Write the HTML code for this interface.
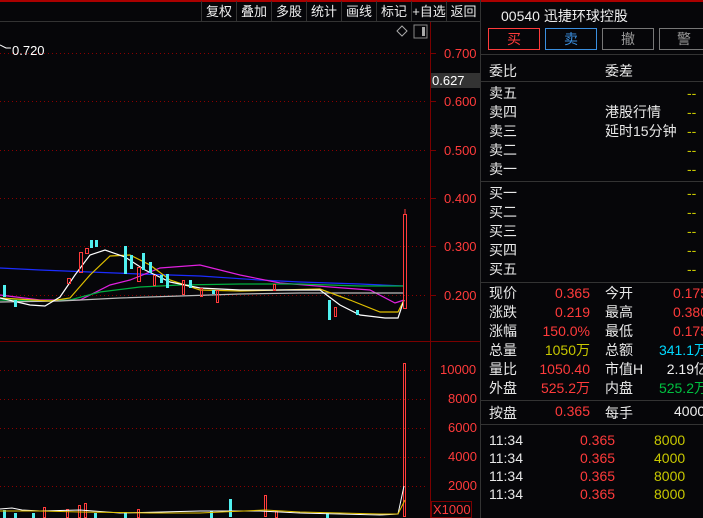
<!DOCTYPE html>
<html><head><meta charset="utf-8"><style>
*{margin:0;padding:0;box-sizing:border-box}
body{width:703px;height:518px;background:#060609;overflow:hidden;position:relative;font-family:"Liberation Sans","Noto Sans CJK SC",sans-serif;font-size:14px;color:#e8e8e8}
.a{position:absolute;white-space:nowrap}
.tb{position:absolute;top:1px;height:21px;border-left:1px solid #333;color:#eee;font-size:13px;line-height:21px;text-align:center}
.r{color:#ff3b3b}.y{color:#c8c800}.c{color:#00d8ff}.g{color:#00c040}.w{color:#eee}
.hl{position:absolute;left:481px;width:222px;height:1px;background:#333}
.btn{position:absolute;top:28px;height:22px;width:52px;border:1px solid #777;text-align:center;line-height:20px;font-size:14px;color:#999}
</style></head><body>
<div class="a" style="left:0;top:0;width:703px;height:2px;background:#a00"></div>
<div class="a" style="left:0;top:21px;width:480px;height:1px;background:#333"></div>
<div class="tb" style="left:201px;width:35px">复权</div>
<div class="tb" style="left:236px;width:35px">叠加</div>
<div class="tb" style="left:271px;width:35px">多股</div>
<div class="tb" style="left:306px;width:35px">统计</div>
<div class="tb" style="left:341px;width:35px">画线</div>
<div class="tb" style="left:376px;width:35px">标记</div>
<div class="tb" style="left:411px;width:35px">+自选</div>
<div class="tb" style="left:446px;width:34px">返回</div>
<div class="a" style="left:480px;top:0;width:1px;height:518px;background:#333"></div>
<svg class="a" style="left:0;top:0" width="480" height="518">
<g stroke="#7a0000" stroke-width="1">
<line x1="430.5" y1="22" x2="430.5" y2="518"/>
<line x1="0" y1="341.5" x2="480" y2="341.5"/>
</g>
<g stroke="#8a0000" stroke-dasharray="1,3">
<line x1="0" y1="53.5" x2="428" y2="53.5"/><line x1="0" y1="101.5" x2="428" y2="101.5"/><line x1="0" y1="150.5" x2="428" y2="150.5"/><line x1="0" y1="198.5" x2="428" y2="198.5"/><line x1="0" y1="246.5" x2="428" y2="246.5"/><line x1="0" y1="295.5" x2="428" y2="295.5"/>
<line x1="0" y1="370.5" x2="428" y2="370.5"/><line x1="0" y1="399.5" x2="428" y2="399.5"/><line x1="0" y1="428.5" x2="428" y2="428.5"/><line x1="0" y1="457.5" x2="428" y2="457.5"/><line x1="0" y1="486.5" x2="428" y2="486.5"/>
</g>
<g stroke="#7a0000"><line x1="430" y1="53.5" x2="436" y2="53.5"/><line x1="430" y1="101.5" x2="436" y2="101.5"/><line x1="430" y1="150.5" x2="436" y2="150.5"/><line x1="430" y1="198.5" x2="436" y2="198.5"/><line x1="430" y1="246.5" x2="436" y2="246.5"/><line x1="430" y1="295.5" x2="436" y2="295.5"/></g>
<rect x="414" y="25" width="13" height="13" fill="none" stroke="#888"/><rect x="422" y="27" width="3" height="9" fill="#aaa"/>
<path d="M402 26 l5 5 -5 5 -5 -5z" fill="none" stroke="#aaa"/>
<path d="M0 45 l6 3 5 0" stroke="#fff" fill="none"/>
<text x="12" y="55" fill="#fff" font-size="13" font-family="Liberation Sans">0.720</text>
<g fill="none" stroke-width="1.2">
<polyline stroke="#1b2cff" points="0,268 40,270 90,272 140,274 200,276 260,280 300,282 360,284 404,286"/>
<polyline stroke="#e020e0" points="0,295 40,300 80,300 110,285 130,280 160,268 200,265 240,275 280,283 330,287 370,290 395,303 404,300"/>
<polyline stroke="#00b040" points="0,300 40,301 70,300 100,292 140,287 180,285 240,284 300,284 360,286 404,286"/>
<polyline stroke="#bbb" points="0,302 60,301 120,298 180,296 240,294 300,293 360,293 404,293"/>
<polyline stroke="#e0c000" points="0,298 50,301 70,298 90,275 110,256 130,255 150,265 170,280 200,290 240,291 280,290 320,289 350,300 380,312 398,312 404,300"/>
<polyline stroke="#fff" points="0,298 30,305 45,306 60,297 75,275 90,255 105,250 125,257 145,270 170,282 200,288 240,290 290,290 320,290 340,305 360,315 385,318 398,318 404,300"/>
</g>
<g fill="#50f0f0">
<rect x="3" y="285" width="3" height="12"/><rect x="14" y="300" width="3" height="7"/><rect x="90" y="240" width="3" height="8"/><rect x="95" y="240" width="3" height="7"/><rect x="124" y="246" width="3" height="28"/><rect x="130" y="255" width="3" height="14"/><rect x="142" y="253" width="3" height="17"/><rect x="149" y="262" width="3" height="11"/><rect x="160" y="275" width="3" height="8"/><rect x="166" y="274" width="3" height="14"/><rect x="189" y="280" width="3" height="8"/><rect x="212" y="290" width="3" height="4"/><rect x="328" y="300" width="3" height="20"/><rect x="356" y="310" width="3" height="5"/>
</g>
<g fill="none" stroke="#ff3b3b">
<rect x="79.5" y="252.5" width="3" height="20"/><rect x="85.5" y="248.5" width="3" height="5"/><rect x="67.5" y="278.5" width="3" height="5"/><rect x="137.5" y="267.5" width="3" height="14"/><rect x="153.5" y="275.5" width="2" height="10"/><rect x="182.5" y="280.5" width="2" height="14"/><rect x="200.5" y="288.5" width="2" height="8"/><rect x="216.5" y="290.5" width="2" height="12"/><rect x="273.5" y="284.5" width="2" height="6"/><rect x="334.5" y="307.5" width="2" height="9"/>
<rect x="403.5" y="214.5" width="3" height="94"/><line x1="405" y1="209" x2="405" y2="214"/>
</g>
<g font-family="Liberation Sans" font-size="13" fill="#ff3b3b">
<text x="444" y="58">0.700</text><text x="444" y="106">0.600</text><text x="444" y="155">0.500</text><text x="444" y="203">0.400</text><text x="444" y="251">0.300</text><text x="444" y="300">0.200</text>
<text x="440" y="374">10000</text><text x="448" y="403">8000</text><text x="448" y="432">6000</text><text x="448" y="461">4000</text><text x="448" y="490">2000</text>
<text x="433" y="514">X1000</text>
</g>
<rect x="431" y="73" width="49" height="15" fill="#333"/>
<text x="432" y="85" font-family="Liberation Sans" font-size="13" fill="#fff">0.627</text>
<rect x="431.5" y="501.5" width="40" height="16" fill="none" stroke="#7a0000"/>
<rect x="403.5" y="363.5" width="2" height="153" fill="none" stroke="#ff3b3b"/>
<rect x="264.5" y="495.5" width="2" height="21" fill="none" stroke="#ff3b3b"/>
<rect x="229" y="499" width="3" height="18" fill="#50f0f0"/>
<g fill="#50f0f0"><rect x="3" y="510" width="3" height="8"/><rect x="14" y="513" width="3" height="5"/><rect x="32" y="513" width="3" height="5"/><rect x="94" y="513" width="3" height="5"/><rect x="124" y="512" width="3" height="6"/><rect x="210" y="511" width="3" height="7"/><rect x="326" y="513" width="3" height="5"/></g>
<g fill="none" stroke="#ff3b3b"><rect x="43.5" y="507.5" width="2" height="10"/><rect x="66.5" y="509.5" width="2" height="8"/><rect x="78.5" y="505.5" width="2" height="12"/><rect x="84.5" y="503.5" width="2" height="14"/><rect x="137.5" y="509.5" width="2" height="8"/><rect x="275.5" y="511.5" width="2" height="6"/></g>
<polyline fill="none" stroke="#fff" points="0,509 12,508 22,510 40,511 80,510 120,513 200,511 260,511 300,513 380,515 398,514 401,500 404,486"/>
<polyline fill="none" stroke="#e0c000" points="0,511 40,511 80,512 150,513 200,513 265,510 300,512 380,514 398,514 402,506 405,500"/>
</svg>
<div class="a w" style="left:501px;top:6px;font-size:14px">00540 迅捷环球控股</div>
<div class="btn" style="left:488px;border-color:#ff3b3b;color:#ff3b3b">买</div>
<div class="btn" style="left:545px;border-color:#3a8fe0;color:#3a8fe0">卖</div>
<div class="btn" style="left:602px">撤</div>
<div class="btn" style="left:659px;width:50px">警</div>
<div class="hl" style="top:54px"></div>
<div class="a" style="left:489px;top:61px">委比</div><div class="a" style="left:605px;top:61px">委差</div>
<div class="hl" style="top:81px"></div>
<div class="a" style="left:489px;top:84px;line-height:19px">卖五<br>卖四<br>卖三<br>卖二<br>卖一</div>
<div class="a" style="left:605px;top:103px;line-height:19px">港股行情<br>延时15分钟</div>
<div class="a y" style="left:687px;top:84px;line-height:19px">--<br>--<br>--<br>--<br>--</div>
<div class="hl" style="top:181px"></div>
<div class="a" style="left:489px;top:184px;line-height:19px">买一<br>买二<br>买三<br>买四<br>买五</div>
<div class="a y" style="left:687px;top:184px;line-height:19px">--<br>--<br>--<br>--<br>--</div>
<div class="hl" style="top:282px"></div>
<div class="a" style="left:489px;top:284px;line-height:19px">现价<br>涨跌<br>涨幅<br>总量<br>量比<br>外盘</div>
<div class="a" style="right:113px;top:284px;line-height:19px;text-align:right"><span class="r">0.365</span><br><span class="r">0.219</span><br><span class="r">150.0%</span><br><span class="y">1050万</span><br><span class="r">1050.40</span><br><span class="r">525.2万</span></div>
<div class="a" style="left:605px;top:284px;line-height:19px">今开<br>最高<br>最低<br>总额<br>市值H<br>内盘</div>
<div class="a" style="left:626px;top:284px;line-height:19px;width:82px;text-align:right"><span class="r">0.175</span><br><span class="r">0.380</span><br><span class="r">0.175</span><br><span class="c">341.1万</span><br><span class="w">2.19亿</span><br><span class="g">525.2万</span></div>
<div class="hl" style="top:400px"></div>
<div class="a" style="left:489px;top:403px">按盘</div><div class="a r" style="right:113px;top:403px">0.365</div>
<div class="a" style="left:605px;top:403px">每手</div><div class="a w" style="left:674px;top:403px">4000</div>
<div class="hl" style="top:424px"></div>
<div class="a" style="left:489px;top:431px;line-height:18px">11:34<br>11:34<br>11:34<br>11:34</div>
<div class="a r" style="left:580px;top:431px;line-height:18px">0.365<br>0.365<br>0.365<br>0.365</div>
<div class="a y" style="left:654px;top:431px;line-height:18px">8000<br>4000<br>8000<br>8000</div>
</body></html>
